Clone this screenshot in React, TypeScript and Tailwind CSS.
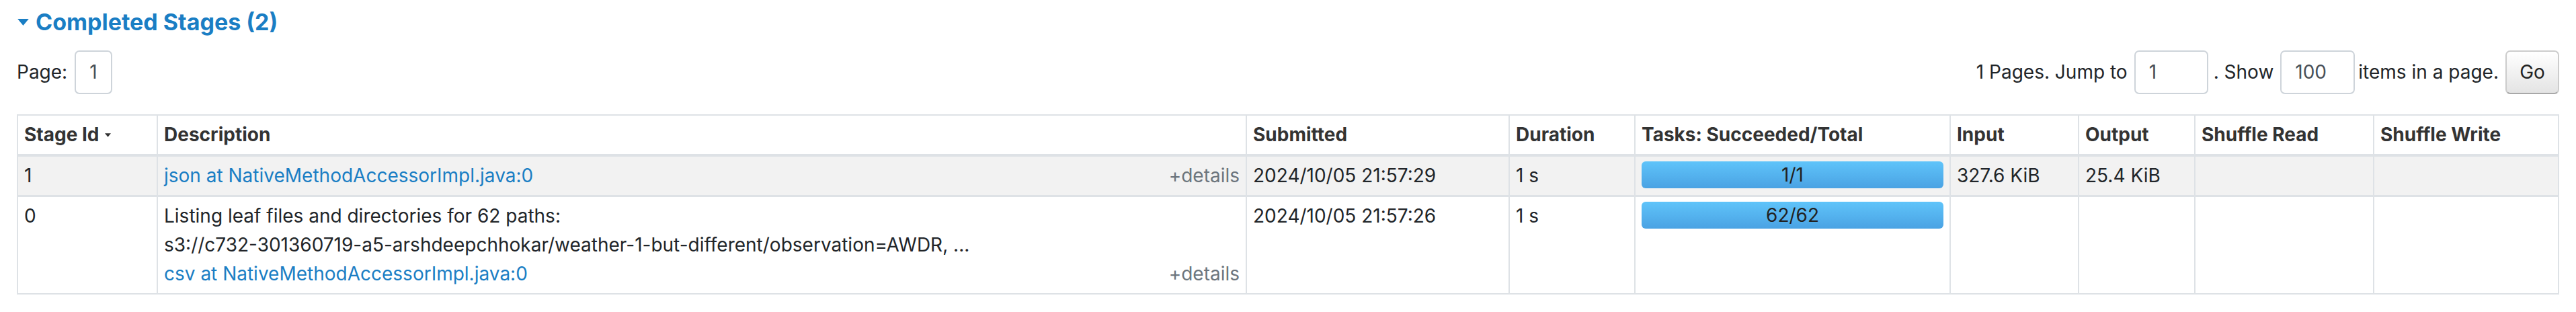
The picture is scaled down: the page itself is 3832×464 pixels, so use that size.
const border = "border-2 border-[#dee2e6]";

function Caret({ className }: { className?: string }) {
  return (
    <svg viewBox="0 0 10 6" className={className} fill="currentColor">
      <polygon points="0,0 10,0 5,6" />
    </svg>
  );
}

function Bar({ label }: { label: string }) {
  return (
    <div className="h-[40px] rounded-[6px] bg-gradient-to-b from-[#5fc4fa] to-[#4aa2e3] text-center leading-[40px] text-[#222]">
      {label}
    </div>
  );
}

function Box({ value, w }: { value: string; w: string }) {
  return (
    <div
      className={`${w} h-[65px] rounded-[7px] border-2 border-[#ced4da] bg-white pl-[20px] leading-[61px] text-[#495057]`}
    >
      {value}
    </div>
  );
}

const headers = [
  "Stage Id",
  "Description",
  "Submitted",
  "Duration",
  "Tasks: Succeeded/Total",
  "Input",
  "Output",
  "Shuffle Read",
  "Shuffle Write",
];
const widths = [208, 1620, 391, 187, 469, 191, 173, 266, 275];

export default function App() {
  const link = "text-[#1a7ec4]";
  const details = "text-[#6c757d]";
  const td = `${border} px-[9px] py-[7px] align-top`;

  return (
    <div
      className="w-[3832px] h-[464px] bg-white px-[25px] text-[28px] leading-[43px] text-[#212529]"
      style={{ fontFamily: "Inter, 'Liberation Sans', sans-serif" }}
    >
      <div className={`flex h-[66px] items-center ${link}`}>
        <Caret className="w-[19px] h-[10px] mr-[9px]" />
        <span className="text-[34px] font-bold leading-none">Completed Stages (2)</span>
      </div>

      <div className="mt-[9px] flex h-[65px] items-center justify-between">
        <div className="flex items-center gap-[11px]">
          <span>Page:</span>
          <Box value="1" w="w-[56px]" />
        </div>
        <div className="flex items-center">
          <span className="mr-[10px]">1 Pages. Jump to</span>
          <Box value="1" w="w-[110px]" />
          <span className="ml-[8px] mr-[10px]">. Show</span>
          <Box value="100" w="w-[111px]" />
          <span className="ml-[5px] mr-[10px]">items in a page.</span>
          <button className="h-[65px] w-[80px] rounded-[7px] border-2 border-[#ccc] border-b-[#a8a8a8] bg-gradient-to-b from-white to-[#e4e4e4] text-[#222]">
            Go
          </button>
        </div>
      </div>

      <table className="mt-[30px] w-[3780px] table-fixed border-collapse">
        <colgroup>
          {widths.map((w, i) => (
            <col key={i} style={{ width: w }} />
          ))}
        </colgroup>
        <thead>
          <tr>
            {headers.map((h, i) => (
              <th
                key={h}
                className={`${border} border-b-4 px-[9px] py-[7px] text-left font-bold text-[#333]`}
              >
                {i === 0 ? (
                  <span className="flex items-center">
                    {h}
                    <Caret className="ml-[8px] w-[9px] h-[6px] text-[#333]" />
                  </span>
                ) : (
                  h
                )}
              </th>
            ))}
          </tr>
        </thead>
        <tbody>
          <tr className="bg-[#f2f2f2]">
            <td className={`${td} border-b-[3px]`}>1</td>
            <td className={`${td} border-b-[3px]`}>
              <div className="flex justify-between">
                <span className={link}>json at NativeMethodAccessorImpl.java:0</span>
                <span className={details}>+details</span>
              </div>
            </td>
            <td className={`${td} border-b-[3px]`}>2024/10/05 21:57:29</td>
            <td className={`${td} border-b-[3px]`}>1 s</td>
            <td className={`${td} border-b-[3px]`}>
              <Bar label="1/1" />
            </td>
            <td className={`${td} border-b-[3px]`}>327.6 KiB</td>
            <td className={`${td} border-b-[3px]`}>25.4 KiB</td>
            <td className={`${td} border-b-[3px]`}></td>
            <td className={`${td} border-b-[3px]`}></td>
          </tr>
          <tr>
            <td className={td}>0</td>
            <td className={td}>
              <div>Listing leaf files and directories for 62 paths:</div>
              <div>s3://c732-301360719-a5-arshdeepchhokar/weather-1-but-different/observation=AWDR, ...</div>
              <div className="flex justify-between">
                <span className={link}>csv at NativeMethodAccessorImpl.java:0</span>
                <span className={details}>+details</span>
              </div>
            </td>
            <td className={td}>2024/10/05 21:57:26</td>
            <td className={td}>1 s</td>
            <td className={td}>
              <Bar label="62/62" />
            </td>
            <td className={td}></td>
            <td className={td}></td>
            <td className={td}></td>
            <td className={td}></td>
          </tr>
        </tbody>
      </table>
    </div>
  );
}
